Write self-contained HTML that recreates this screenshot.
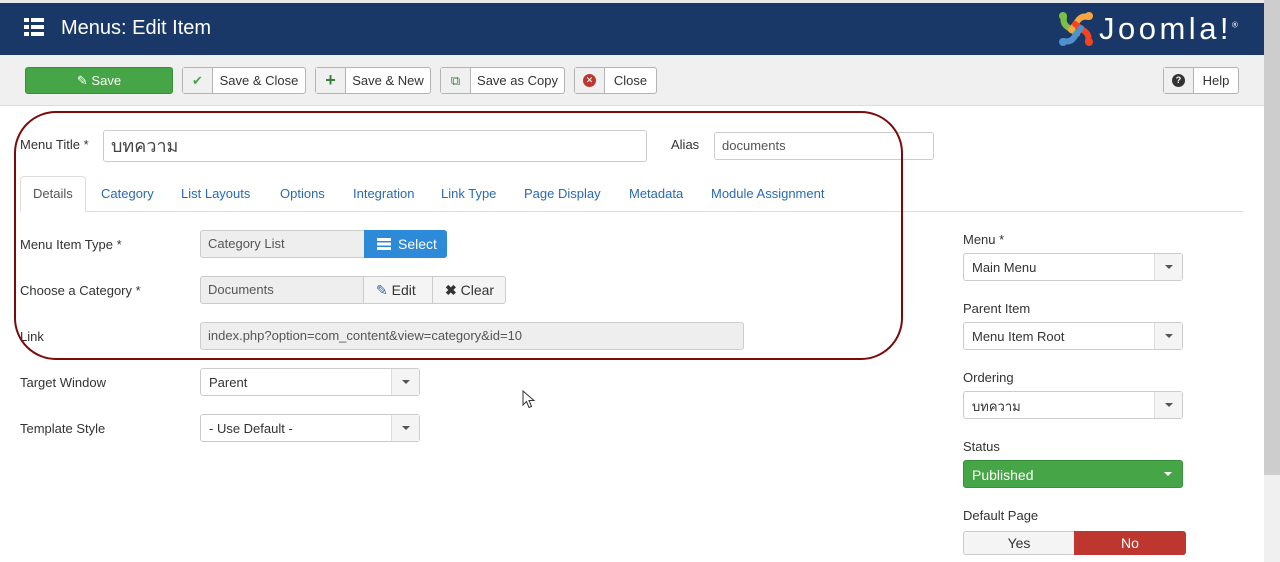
<!DOCTYPE html>
<html><head><meta charset="utf-8"><style>
*{box-sizing:border-box;margin:0;padding:0}
body{width:1280px;height:562px;overflow:hidden;background:#fff;font-family:"Liberation Sans",Arial,sans-serif;font-size:13px;color:#333;position:relative}
.a{position:absolute}
.hdr{left:0;top:3px;width:1264px;height:52px;background:#1a3867}
.tb{left:0;top:55px;width:1264px;height:51px;background:#f0f0f0;border-bottom:1px solid #ddd}
.btn{position:absolute;top:67px;height:27px;border:1px solid #b3b3b3;border-radius:3px;background:#fff;display:flex;align-items:center;font-size:13px;color:#333}
.btn .ic{width:30px;height:100%;border-right:1px solid #b3b3b3;background:#f0f0f0;display:flex;align-items:center;justify-content:center}
.btn .t{flex:1;text-align:center}
.lbl{position:absolute;font-size:13px;color:#333}
.inp{position:absolute;height:28px;border:1px solid #ccc;border-radius:3px;background:#fff;padding:0 7px;line-height:26px;font-size:13px;color:#555}
.ro{background:#eee}
.sel{position:absolute;height:28px;border:1px solid #ccc;border-radius:3px;background:#fff;font-size:13px;color:#333}
.sel span{position:absolute;left:8px;top:6px}
.sel i{position:absolute;right:0;top:0;width:28px;height:26px;border-left:1px solid #ddd;background:#f4f4f4}
.sel i:after{content:"";position:absolute;left:10px;top:11px;border:4px solid transparent;border-top:4px solid #555;border-bottom:0}
.tab{position:absolute;top:186px;color:#2a69b8;font-size:13px}
</style></head><body>
<div class="a" style="left:0;top:0;width:1264px;height:3px;background:#e8e8e8"></div>
<div class="a hdr"></div>
<div class="a" style="left:1264px;top:0;width:16px;height:475px;background:#cdcdcd"></div>
<div class="a" style="left:1264px;top:475px;width:16px;height:87px;background:#f0f0f0"></div>
<svg class="a" style="left:24px;top:18px" width="20" height="18"><g fill="#fff"><rect x="0" y="0" width="5" height="4"/><rect x="7" y="0" width="13" height="4"/><rect x="0" y="7" width="5" height="4"/><rect x="7" y="7" width="13" height="4"/><rect x="0" y="14" width="5" height="4"/><rect x="7" y="14" width="13" height="4"/></g></svg>
<div class="a" style="left:61px;top:17px;color:#fff;font-size:20px">Menus: Edit Item</div>
<svg class="a" style="left:1057px;top:10px" width="38" height="38" viewBox="0 0 38 38"><g stroke-width="6" fill="none" stroke-linecap="round">
<path d="M7 7 Q5 14 12 18 L20 24" stroke="#7ac143"/>
<path d="M31 7 Q24 5 20 12 L14 20" stroke="#f9a541"/>
<path d="M31 31 Q33 24 26 20 L18 14" stroke="#f44321"/>
<path d="M7 31 Q14 33 18 26 L24 18" stroke="#5091cd"/></g>
<circle cx="6" cy="6" r="4" fill="#7ac143"/><circle cx="32" cy="6" r="4" fill="#f9a541"/><circle cx="32" cy="32" r="4" fill="#f44321"/><circle cx="6" cy="32" r="4" fill="#5091cd"/></svg>
<div class="a" style="left:1099px;top:11px;color:#fff;font-size:31px;letter-spacing:3.5px">Joomla!<sup style="font-size:8px;letter-spacing:0">®</sup></div>
<div class="a tb"></div>
<div class="btn" style="left:25px;width:148px;background:#46a546;border-color:#3a8f3a;color:#fff;justify-content:center">&#9998; Save</div>
<div class="btn" style="left:182px;width:124px"><div class="ic" style="color:#46a546">&#10004;</div><div class="t">Save &amp; Close</div></div>
<div class="btn" style="left:315px;width:116px"><div class="ic" style="color:#378137;font-weight:bold;font-size:18px">+</div><div class="t">Save &amp; New</div></div>
<div class="btn" style="left:440px;width:125px"><div class="ic" style="color:#378137">&#10697;</div><div class="t">Save as Copy</div></div>
<div class="btn" style="left:574px;width:83px"><div class="ic"><span style="display:inline-block;width:13px;height:13px;border-radius:50%;background:#bd362f;color:#fff;font-size:9px;line-height:13px;text-align:center">✕</span></div><div class="t">Close</div></div>
<div class="btn" style="left:1163px;width:76px"><div class="ic"><span style="display:inline-block;width:13px;height:13px;border-radius:50%;background:#333;color:#fff;font-size:9px;line-height:13px;text-align:center;font-weight:bold">?</span></div><div class="t">Help</div></div>

<div class="lbl" style="left:20px;top:137px">Menu Title *</div>
<div class="inp" style="left:103px;top:130px;width:544px;height:32px;font-size:18px;line-height:30px;color:#444">บทความ</div>
<div class="lbl" style="left:671px;top:137px">Alias</div>
<div class="inp" style="left:714px;top:132px;width:220px">documents</div>

<div class="a" style="left:20px;top:211px;width:1223px;height:1px;background:#ddd"></div>
<div class="a" style="left:20px;top:176px;width:66px;height:36px;border:1px solid #ddd;border-bottom:1px solid #fff;border-radius:4px 4px 0 0;background:#fff"></div>
<div class="tab" style="left:33px;color:#555">Details</div>
<div class="tab" style="left:101px">Category</div>
<div class="tab" style="left:181px">List Layouts</div>
<div class="tab" style="left:280px">Options</div>
<div class="tab" style="left:353px">Integration</div>
<div class="tab" style="left:441px">Link Type</div>
<div class="tab" style="left:524px">Page Display</div>
<div class="tab" style="left:629px">Metadata</div>
<div class="tab" style="left:711px">Module Assignment</div>

<div class="lbl" style="left:20px;top:237px">Menu Item Type *</div>
<div class="inp ro" style="left:200px;top:230px;width:168px;border-radius:3px 0 0 3px">Category List</div>
<div class="a" style="left:364px;top:230px;width:83px;height:28px;background:#2d8ad8;border-radius:0 3px 3px 0;color:#fff;line-height:28px;padding-left:34px;font-size:14px">Select</div>
<svg class="a" style="left:377px;top:238px" width="14" height="12"><g fill="#fff"><rect x="0" y="0" width="14" height="3"/><rect x="0" y="4.5" width="14" height="3"/><rect x="0" y="9" width="14" height="3"/></g></svg>
<div class="lbl" style="left:20px;top:283px">Choose a Category *</div>
<div class="inp ro" style="left:200px;top:276px;width:168px;border-radius:3px 0 0 3px">Documents</div>
<div class="a" style="left:363px;top:276px;width:70px;height:28px;border:1px solid #ccc;background:#f4f4f4;line-height:26px;padding-left:12px;color:#333;font-size:14px"><span style="color:#2a69b8">&#9998;</span> Edit</div>
<div class="a" style="left:432px;top:276px;width:74px;height:28px;border:1px solid #ccc;background:#f4f4f4;border-radius:0 3px 3px 0;line-height:26px;padding-left:12px;color:#333;font-size:14px"><b>✖</b> Clear</div>
<div class="lbl" style="left:20px;top:329px">Link</div>
<div class="inp ro" style="left:200px;top:322px;width:544px">index.php?option=com_content&amp;view=category&amp;id=10</div>
<div class="lbl" style="left:20px;top:375px">Target Window</div>
<div class="sel" style="left:200px;top:368px;width:220px"><span>Parent</span><i></i></div>
<div class="lbl" style="left:20px;top:421px">Template Style</div>
<div class="sel" style="left:200px;top:414px;width:220px"><span>- Use Default -</span><i></i></div>

<div class="a" style="left:14px;top:111px;width:889px;height:249px;border:2px solid #7c0a0a;border-radius:42px"></div>
<svg class="a" style="left:522px;top:390px" width="14" height="20"><path d="M1 1 L1 15 L4.5 11.5 L7 17.5 L9.5 16.5 L7 10.5 L12 10.5 Z" fill="#fff" stroke="#333" stroke-width="1"/></svg>

<div class="lbl" style="left:963px;top:232px">Menu *</div>
<div class="sel" style="left:963px;top:253px;width:220px"><span>Main Menu</span><i></i></div>
<div class="lbl" style="left:963px;top:301px">Parent Item</div>
<div class="sel" style="left:963px;top:322px;width:220px"><span>Menu Item Root</span><i></i></div>
<div class="lbl" style="left:963px;top:370px">Ordering</div>
<div class="sel" style="left:963px;top:391px;width:220px"><span style="top:4px">บทความ</span><i></i></div>
<div class="lbl" style="left:963px;top:439px">Status</div>
<div class="a" style="left:963px;top:460px;width:220px;height:28px;background:#46a546;border:1px solid #3a8f3a;border-radius:3px;color:#fff;padding:6px 8px;font-size:14px">Published<span style="position:absolute;right:10px;top:11px;border:4px solid transparent;border-top:4px solid #fff;border-bottom:0"></span></div>
<div class="lbl" style="left:963px;top:508px">Default Page</div>
<div class="a" style="left:963px;top:531px;width:112px;height:24px;border:1px solid #ccc;border-radius:3px 0 0 3px;background:#f4f4f4;text-align:center;line-height:22px;font-size:14px">Yes</div>
<div class="a" style="left:1074px;top:531px;width:112px;height:24px;background:#bd362f;border-radius:0 3px 3px 0;color:#fff;text-align:center;line-height:24px;font-size:14px">No</div>
</body></html>
